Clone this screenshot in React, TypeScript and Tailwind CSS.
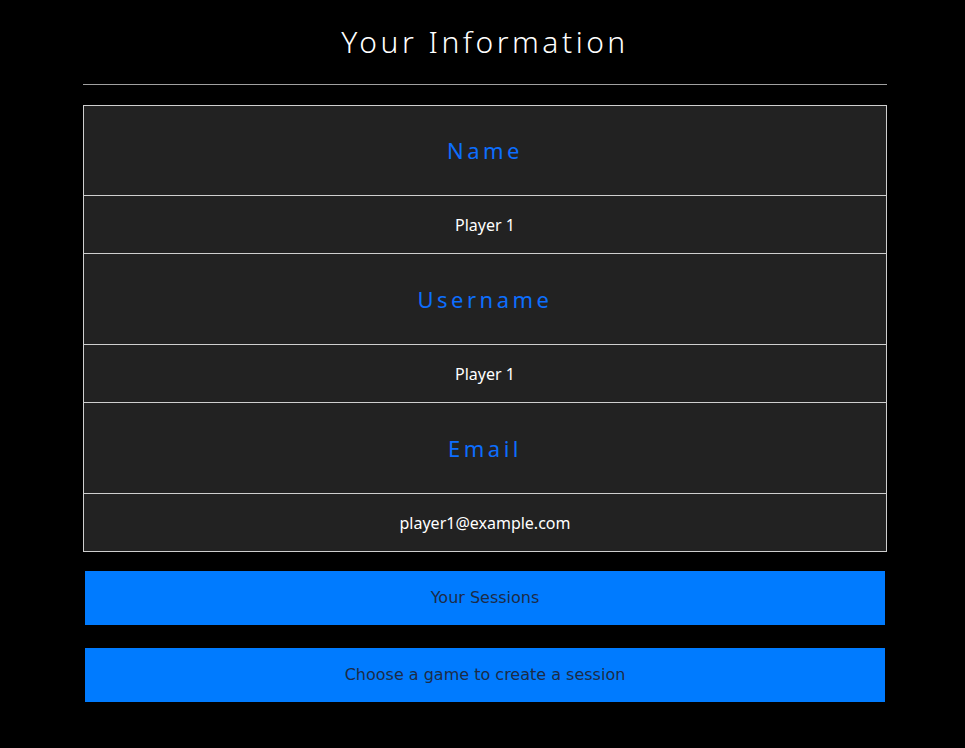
import React from 'react';

const rows = [
  { label: 'Name', value: 'Player 1' },
  { label: 'Username', value: 'Player 1' },
  { label: 'Email', value: 'player1@example.com' },
];

const App: React.FC = () => {
  return (
    <div className="min-h-screen w-full bg-black font-['Noto_Sans',sans-serif]">
      <div className="ml-[83px] w-[804px] pt-[22px]">
        <h1 className="text-center text-[30px] leading-[40px] tracking-[3.5px] font-light text-white">
          Your Information
        </h1>
        <div className="mt-[22px] border-t border-[#a0a0a0]"></div>

        <div className="mt-[20px] border border-[#cfcfcf] bg-[#222222]">
          {rows.map((row, index) => (
            <div key={row.label}>
              <div
                className={`flex items-center justify-center text-[22px] tracking-[3.5px] text-[#0d6efd] ${
                  index > 0 ? 'h-[91px] border-t border-[#cfcfcf]' : 'h-[89px]'
                }`}
              >
                {row.label}
              </div>
              <div className="flex h-[58px] items-center justify-center border-t border-[#cfcfcf] text-[16px] text-white">
                {row.value}
              </div>
            </div>
          ))}
        </div>

        <div className="mt-[19px] flex flex-col gap-[23px] px-[2px]">
          <button className="h-[54px] w-full bg-[#007bff] font-['DejaVu_Sans',sans-serif] text-[16px] text-[#1d2b47]">
            Your Sessions
          </button>
          <button className="h-[54px] w-full bg-[#007bff] font-['DejaVu_Sans',sans-serif] text-[16px] text-[#1d2b47]">
            Choose a game to create a session
          </button>
        </div>
      </div>
    </div>
  );
};

export default App;
